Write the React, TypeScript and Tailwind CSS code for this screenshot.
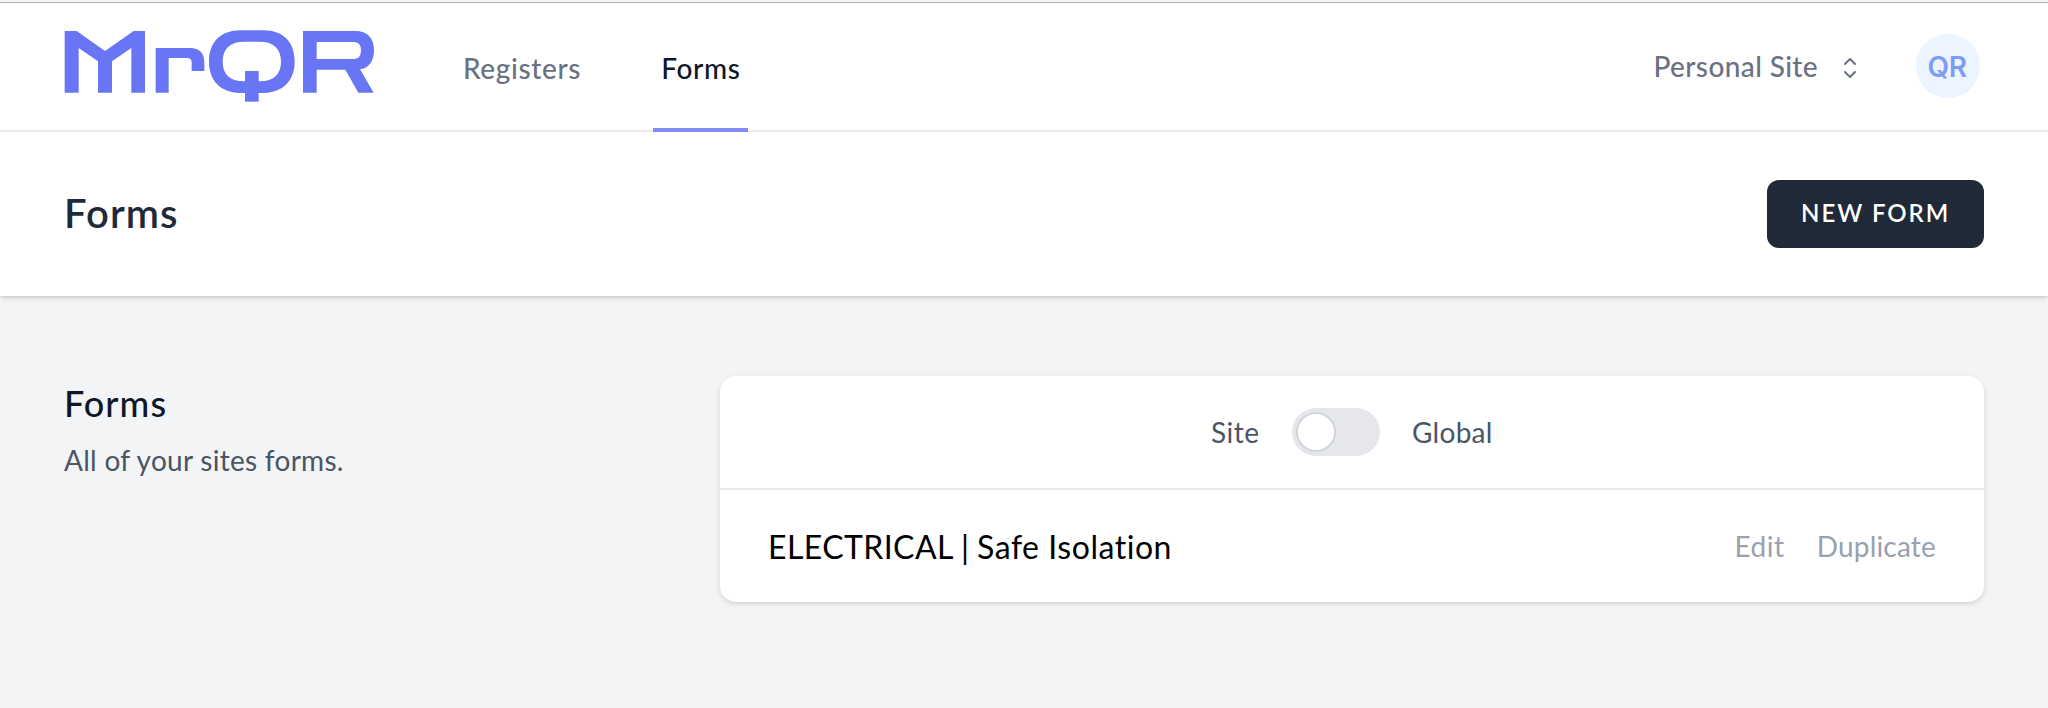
function Logo() {
  return (
    <svg viewBox="72 90 930 216" className="h-[72px] w-[310px]" fill="#6875f5" fillRule="evenodd" aria-label="MrQR">
      <path d="M74 93H110L195 153L281 93H315V278H274V144L216 184V278H174V184L116 144V278H74Z" />
      <path d="M347 144H450Q493 145 493 188V213H455V188Q455 174 441 174H386V278H347Z" />
      <path d="M602 91H670C730 91 764 126 764 185C764 242 728 277 672 279H600C542 277 507 242 507 185C507 126 542 91 602 91ZM612 125C570 125 548 147 548 185C548 222 570 244 612 244H660C701 244 723 222 723 185C723 147 701 125 660 125Z" />
      <rect x="615" y="213" width="41" height="92" />
      <path d="M789 93H946C982 93 1002 114 1002 150C1002 183 986 205 960 208L1001 278H955L916 209H830V278H789ZM830 126V177H943Q963 176 963 151Q963 127 943 126Z" />
    </svg>
  );
}

function SelectorIcon() {
  return (
    <svg viewBox="0 0 24 24" className="size-8" fill="none" stroke="#6b7280" strokeWidth="1.5" strokeLinecap="round" strokeLinejoin="round">
      <path d="M8.25 15L12 18.75 15.75 15m-7.5-6L12 5.25 15.75 9" />
    </svg>
  );
}

function Nav() {
  return (
    <nav className="flex h-[129px] border-b-2 border-[#efefef] bg-white pr-[68px] pl-16">
      <div className="pt-[27px]">
        <Logo />
      </div>
      <a className="ml-[89px] flex items-center pt-0.5 text-[28px] font-medium tracking-[0.64px] text-gray-500">Registers</a>
      <a className="-mb-0.5 ml-[72px] flex w-[95px] items-center border-b-4 border-[#818cf8] pt-1 pl-2 text-[28px] font-medium tracking-[0.67px] text-gray-900">
        Forms
      </a>
      <div className="ml-auto flex items-center gap-4 pt-0.5">
        <span className="-mt-1 text-[28px] font-medium tracking-[0.38px] text-gray-500">Personal Site</span>
        <SelectorIcon />
      </div>
      <div className="mt-[31px] ml-[50px] flex size-16 items-center justify-center rounded-full bg-[#ebf4ff] pt-0.5 pr-0.5 font-['Inter',sans-serif] text-[28px] font-semibold tracking-[-0.5px] text-[#7f9cf5]">
        QR
      </div>
    </nav>
  );
}

function Header() {
  return (
    <header className="relative flex h-[164px] items-center justify-between bg-white px-16 shadow-[0_2px_6px_rgba(0,0,0,0.1),0_2px_4px_-2px_rgba(0,0,0,0.2)]">
      <h2 className="-mt-0.5 text-[40px] font-semibold tracking-[1.1px] text-gray-800">Forms</h2>
      <button className="flex h-[68px] w-[217px] items-center rounded-xl bg-[#1f2937] pb-0.5 pl-[34px] text-[24px] font-semibold tracking-[1.97px] whitespace-nowrap text-white uppercase">
        New Form
      </button>
    </header>
  );
}

function Toggle() {
  return (
    <div className="flex h-12 w-[88px] items-center rounded-full bg-gray-200 pl-1">
      <div className="size-10 rounded-full border-2 border-gray-300 bg-white" />
    </div>
  );
}

export default function App() {
  return (
    <div className="h-[708px] w-[2048px] overflow-hidden bg-[#f3f4f6] font-['Lato','Liberation_Sans',sans-serif]">
      <div className="h-[3px] border-b border-[#b0b0b0] bg-[#f5f5f5]" />
      <Nav />
      <Header />
      <main className="flex items-start px-16 pt-20">
        <section className="w-[656px] pt-[5px]">
          <h3 className="text-[36px] leading-[44px] font-medium tracking-[1.05px] text-gray-900">Forms</h3>
          <p className="mt-[15px] text-[28px] leading-10 tracking-[0.28px] text-gray-600">All of your sites forms.</p>
        </section>
        <section className="w-[1264px] overflow-hidden rounded-2xl bg-white shadow-[0_2px_6px_rgba(0,0,0,0.1),0_2px_4px_-2px_rgba(0,0,0,0.1)]">
          <div className="flex h-[114px] items-center border-b-2 border-gray-200 pl-[491px] text-[28px] text-gray-600">
            <span className="w-[81px] tracking-[0.5px]">Site</span>
            <Toggle />
            <span className="ml-8 tracking-[0.28px]">Global</span>
          </div>
          <div className="flex h-28 items-center pr-12 pl-12">
            <div className="flex pt-0.5 text-[32px] text-black">
              <span className="w-[188px] tracking-[0.42px]">ELECTRICAL</span>
              <span className="mr-[3px] w-[18px] text-center">|</span>
              <span className="tracking-[0.54px]">Safe Isolation</span>
            </div>
            <span className="ml-auto text-[28px] tracking-[0.57px] text-gray-400">Edit</span>
            <span className="ml-8 text-[28px] tracking-[0.19px] text-gray-400">Duplicate</span>
          </div>
        </section>
      </main>
    </div>
  );
}
